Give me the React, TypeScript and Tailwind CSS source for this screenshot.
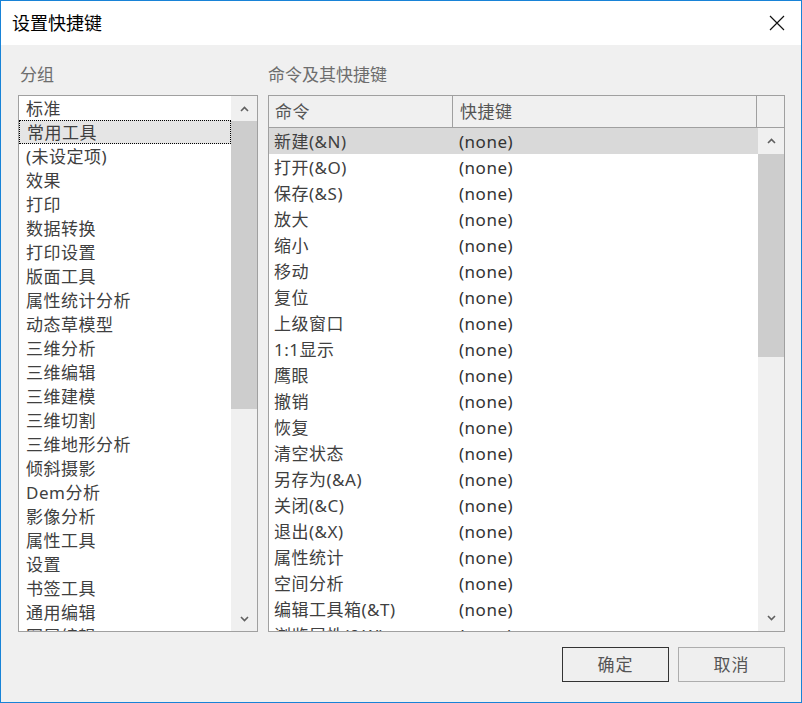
const groups = [
  "标准",
  "常用工具",
  "(未设定项)",
  "效果",
  "打印",
  "数据转换",
  "打印设置",
  "版面工具",
  "属性统计分析",
  "动态草模型",
  "三维分析",
  "三维编辑",
  "三维建模",
  "三维切割",
  "三维地形分析",
  "倾斜摄影",
  "Dem分析",
  "影像分析",
  "属性工具",
  "设置",
  "书签工具",
  "通用编辑",
  "图层编辑",
];

const commands = [
  "新建(&N)",
  "打开(&O)",
  "保存(&S)",
  "放大",
  "缩小",
  "移动",
  "复位",
  "上级窗口",
  "1:1显示",
  "鹰眼",
  "撤销",
  "恢复",
  "清空状态",
  "另存为(&A)",
  "关闭(&C)",
  "退出(&X)",
  "属性统计",
  "空间分析",
  "编辑工具箱(&T)",
  "浏览属性(&W)",
];

function Chevron({ down }: { down?: boolean }) {
  return (
    <svg width="9" height="6" viewBox="0 0 9 6" className={down ? "rotate-180" : ""}>
      <path d="M1 5 L4.5 1.5 L8 5" fill="none" stroke="#606060" strokeWidth="1.6" />
    </svg>
  );
}

function ScrollBar({ btn, thumb }: { btn: number; thumb: number }) {
  return (
    <div className="flex w-[26px] shrink-0 flex-col bg-[#f0f0f0]">
      <div className="flex shrink-0 items-center justify-center" style={{ height: btn }}>
        <Chevron />
      </div>
      <div className="shrink-0 bg-[#cdcdcd]" style={{ height: thumb }} />
      <div className="flex-1" />
      <div className="flex shrink-0 items-center justify-center" style={{ height: btn }}>
        <Chevron down />
      </div>
    </div>
  );
}

export default function App() {
  return (
    <div
      className="flex h-[703px] w-[802px] flex-col overflow-hidden border border-[#1883d7] bg-[#f0f0f0] text-[#404040]"
      style={{ fontFamily: '"Noto Sans", "Noto Sans CJK SC", sans-serif' }}
    >
      {/* Title bar */}
      <div className="flex h-[44px] shrink-0 items-center justify-between bg-white pl-[11px] pr-[16px]">
        <span className="text-[18px] leading-none text-black">设置快捷键</span>
        <svg width="16" height="16" viewBox="0 0 16 16">
          <path d="M1 1 L15 15 M15 1 L1 15" stroke="#111" strokeWidth="1.2" />
        </svg>
      </div>

      <div className="flex flex-1 flex-col pl-[17px] pr-[16px] pt-[18px]">
        <div className="flex h-[24px] items-center text-[17px] text-[#6d6d6d]">
          <span className="w-[250px] pl-[2px]">分组</span>
          <span>命令及其快捷键</span>
        </div>

        <div className="mt-[8px] flex h-[537px] gap-[10px]">
          {/* Groups list */}
          <div className="flex w-[240px] shrink-0 overflow-hidden border border-[#a0a0a0] bg-white">
            <div className="flex-1 overflow-hidden text-[17px] tracking-[0.5px]">
              {groups.map((g, i) => (
                <div
                  key={g}
                  className={
                    "flex h-[24px] items-center pl-[7px] leading-none " +
                    (i === 1 ? "border border-dotted border-black bg-[#e5e5e5] pl-[6px]" : "")
                  }
                >
                  {g}
                </div>
              ))}
            </div>
            <ScrollBar btn={25} thumb={288} />
          </div>

          {/* Commands list */}
          <div className="flex flex-1 flex-col overflow-hidden border border-[#a0a0a0] bg-white">
            <div className="flex h-[32px] shrink-0 border-b border-[#a0a0a0] bg-[#f0f0f0] text-[17px] tracking-[0.5px] text-[#555]">
              <div className="flex w-[184px] items-center border-r border-[#a0a0a0] pl-[6px]">命令</div>
              <div className="flex w-[304px] items-center border-r border-[#a0a0a0] pl-[7px]">快捷键</div>
              <div className="flex-1" />
            </div>
            <div className="flex flex-1 overflow-hidden">
              <div className="flex-1 overflow-hidden text-[17px] tracking-[0.5px]">
                {commands.map((c, i) => (
                  <div
                    key={c}
                    className={"flex h-[26px] items-center leading-none " + (i === 0 ? "bg-[#d9d9d9]" : "")}
                  >
                    <span className="w-[184px] pl-[5px]">{c}</span>
                    <span className="pl-[6px] text-[#333]">(none)</span>
                  </div>
                ))}
              </div>
              <ScrollBar btn={26} thumb={203} />
            </div>
          </div>
        </div>

        <div className="mt-[15px] flex justify-end gap-[9px]">
          <button className="h-[35px] w-[107px] border border-[#333] bg-[#efefef] text-[17px] tracking-[1px] text-[#555]">
            确定
          </button>
          <button className="h-[35px] w-[107px] border border-[#adadad] bg-[#efefef] text-[17px] tracking-[1px] text-[#555]">
            取消
          </button>
        </div>
      </div>
    </div>
  );
}
